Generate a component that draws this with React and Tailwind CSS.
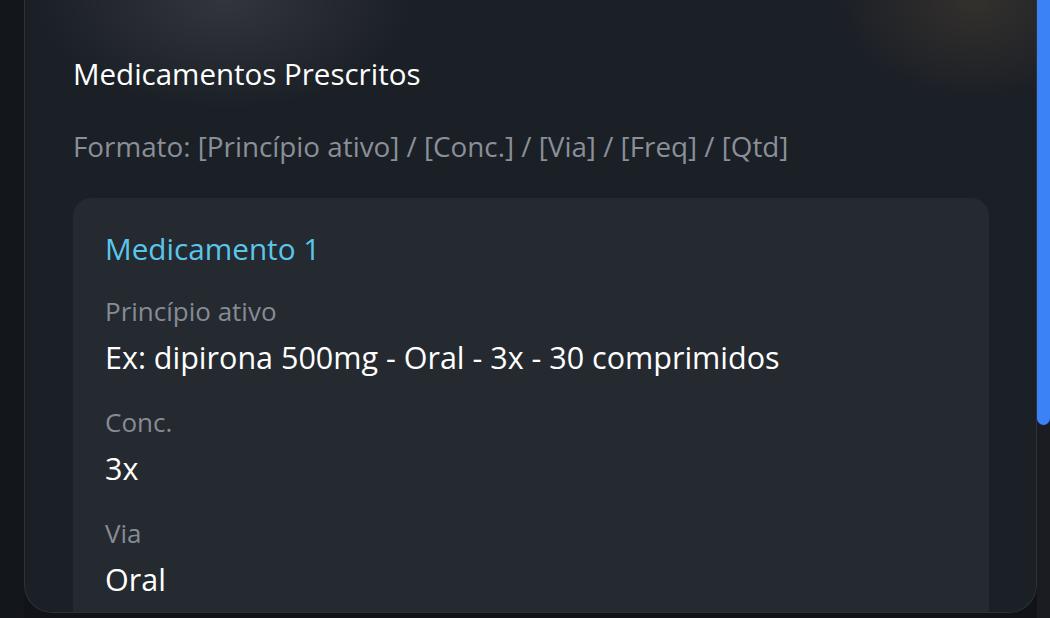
import React from "react";

// Prescribed medication fields shown inside the card
const campos = [
    { label: "Princípio ativo", valor: "Ex: dipirona 500mg - Oral - 3x - 30 comprimidos" },
    { label: "Conc.", valor: "3x" },
    { label: "Via", valor: "Oral" },
];

const App = () => {
    return (
        <div className="flex h-[618px] w-[1050px] overflow-hidden bg-[#111318] font-['Open_Sans',sans-serif]">
            {/* left gutter */}
            <div className="w-[24px] shrink-0 bg-[#13161b]" />

            {/* main panel */}
            <div className="flex-1 mb-[5px] rounded-b-[28px] border border-t-0 border-[#2c313b] bg-[#1b1f26] bg-[radial-gradient(ellipse_190px_110px_at_200px_0px,rgba(255,255,255,0.1),transparent),radial-gradient(ellipse_140px_100px_at_950px_0px,rgba(255,190,100,0.11),transparent)] overflow-hidden">
                <div className="pl-[48px] pr-[47px] pt-[55px]">
                    <h2 className="text-[29.5px] leading-[38px] text-white">Medicamentos Prescritos</h2>
                    <p className="mt-[36px] text-[27.8px] leading-[34px] text-[#8a8f98]">
                        Formato: [Princípio ativo] / [Conc.] / [Via] / [Freq] / [Qtd]
                    </p>

                    <div className="mt-[35px] rounded-[18px] bg-[#252930] px-[32px] pt-[32px] pb-[80px]">
                        <h3 className="text-[29.7px] leading-[38px] text-[#5bc6ea]">Medicamento 1</h3>
                        <div className="mt-[26px] flex flex-col gap-[30px]">
                            {campos.map((c) => (
                                <div key={c.label} className="flex flex-col">
                                    <span className="text-[26px] leading-[34px] text-[#868b94]">{c.label}</span>
                                    <span className="mt-[11px] text-[30.5px] leading-[36px] text-white">{c.valor}</span>
                                </div>
                            ))}
                        </div>
                    </div>
                </div>
            </div>

            {/* scrollbar */}
            <div className="w-[13px] shrink-0 bg-[#1a1c22]">
                <div className="h-[425px] rounded-b-[7px] bg-[#3b82f6]" />
            </div>
        </div>
    );
};

export default App;
